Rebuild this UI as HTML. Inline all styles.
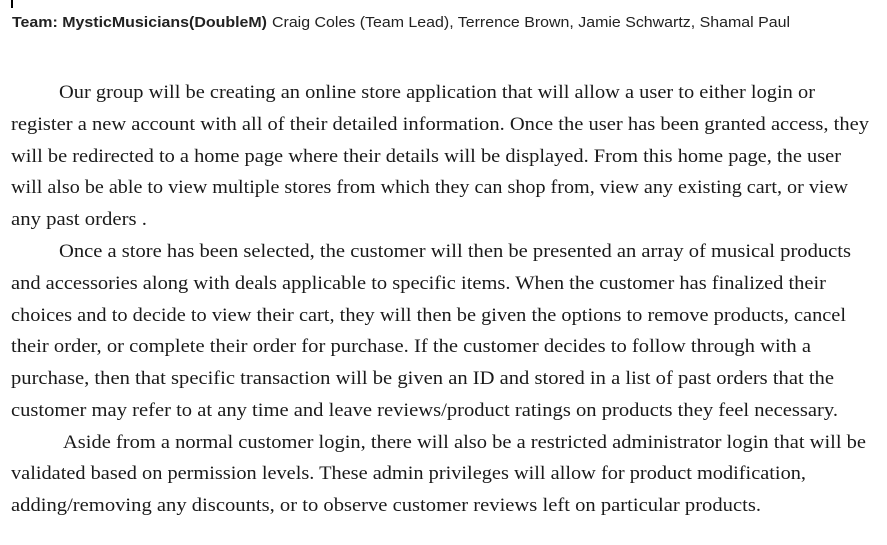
<!DOCTYPE html>
<html><head><meta charset="utf-8"><style>
html,body{margin:0;padding:0;background:#fff;width:887px;height:545px;overflow:hidden}
svg text{font-family:"Liberation Serif",serif;font-size:19px;fill:#1a1a1a}
svg text.h{font-family:"Liberation Sans",sans-serif;font-size:14.5px;fill:#222}
</style></head><body>
<svg width="887" height="545" xmlns="http://www.w3.org/2000/svg">
<rect x="11" y="0" width="2" height="8" fill="#000"/>
<text class="h" x="12" y="27" textLength="255" lengthAdjust="spacingAndGlyphs" style="font-weight:bold">Team: MysticMusicians(DoubleM)</text>
<text class="h" x="272" y="27" textLength="518" lengthAdjust="spacingAndGlyphs">Craig Coles (Team Lead), Terrence Brown, Jamie Schwartz, Shamal Paul</text>
<text x="59" y="98" textLength="756" lengthAdjust="spacingAndGlyphs">Our group will be creating an online store application that will allow a user to either login or</text>
<text x="11" y="130" textLength="858" lengthAdjust="spacingAndGlyphs">register a new account with all of their detailed information. Once the user has been granted access, they</text>
<text x="11" y="162" textLength="830" lengthAdjust="spacingAndGlyphs">will be redirected to a home page where their details will be displayed. From this home page, the user</text>
<text x="11" y="193" textLength="837" lengthAdjust="spacingAndGlyphs">will also be able to view multiple stores from which they can shop from, view any existing cart, or view</text>
<text x="11" y="225" textLength="136" lengthAdjust="spacingAndGlyphs">any past orders .</text>
<text x="59" y="257" textLength="792" lengthAdjust="spacingAndGlyphs">Once a store has been selected, the customer will then be presented an array of musical products</text>
<text x="11" y="289" textLength="815" lengthAdjust="spacingAndGlyphs">and accessories along with deals applicable to specific items. When the customer has finalized their</text>
<text x="11" y="321" textLength="835" lengthAdjust="spacingAndGlyphs">choices and to decide to view their cart, they will then be given the options to remove products, cancel</text>
<text x="11" y="352" textLength="800" lengthAdjust="spacingAndGlyphs">their order, or complete their order for purchase. If the customer decides to follow through with a</text>
<text x="11" y="384" textLength="823" lengthAdjust="spacingAndGlyphs">purchase, then that specific transaction will be given an ID and stored in a list of past orders that the</text>
<text x="11" y="416" textLength="827" lengthAdjust="spacingAndGlyphs">customer may refer to at any time and leave reviews/product ratings on products they feel necessary.</text>
<text x="63" y="448" textLength="803" lengthAdjust="spacingAndGlyphs">Aside from a normal customer login, there will also be a restricted administrator login that will be</text>
<text x="11" y="479" textLength="795" lengthAdjust="spacingAndGlyphs">validated based on permission levels. These admin privileges will allow for product modification,</text>
<text x="11" y="511" textLength="750" lengthAdjust="spacingAndGlyphs">adding/removing any discounts, or to observe customer reviews left on particular products.</text>
</svg>
</body></html>
